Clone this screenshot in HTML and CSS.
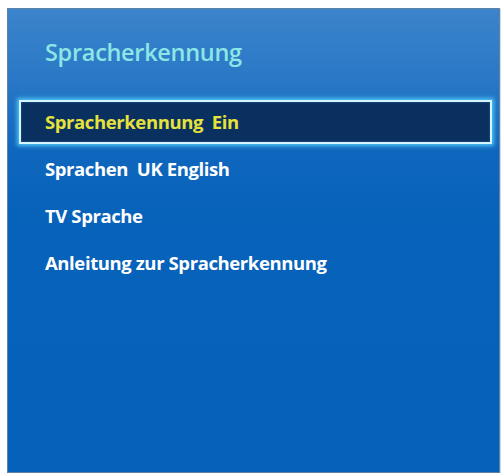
FILE: index.html
```html
<!DOCTYPE html>
<html lang="de">
<head>
<meta charset="utf-8">
<title>Spracherkennung</title>
<link rel="stylesheet" href="styles.css">
</head>
<body>
<div class="panel">
  <h1 class="title">Spracherkennung</h1>
  <ul class="menu">
    <li class="item selected">Spracherkennung&nbsp; Ein</li>
    <li class="item">Sprachen&nbsp; UK English</li>
    <li class="item">TV Sprache</li>
    <li class="item">Anleitung zur Spracherkennung</li>
  </ul>
</div>
</body>
</html>
```

FILE: styles.css
```css
html, body {
  margin: 0;
  padding: 0;
  background: #ffffff;
}

.panel {
  box-sizing: border-box;
  margin: 8px 4px 0 7px;
  width: 493px;
  height: 465px;
  border: 1px solid #5f82a8;
  box-shadow: 1px 1px 0 #c9dcec;
  background: linear-gradient(to bottom, #3c84cb 0%, #2a78c6 15%, #1067bd 30%, #0762ba 45%, #0561b9 100%);
  font-family: "Open Sans", "Lato", sans-serif;
  font-weight: 700;
  display: flex;
  flex-direction: column;
}

.title {
  margin: 0;
  padding: 28px 0 0 37px;
  height: 62px;
  box-sizing: border-box;
  font-size: 23.5px;
  font-weight: 600;
  letter-spacing: -0.3px;
  line-height: 30px;
  color: #8ce6e6;
}

.menu {
  list-style: none;
  margin: 0;
  padding: 29px 7px 0 11px;
  display: flex;
  flex-direction: column;
  gap: 3px;
}

.item {
  box-sizing: border-box;
  height: 44px;
  padding: 0 0 0 26px;
  font-size: 18.5px;
  letter-spacing: -0.4px;
  line-height: 44px;
  color: #ffffff;
  white-space: nowrap;
}

.item.selected {
  padding-left: 24px;
  border: 2px solid #d6f6ff;
  background: #0a305f;
  color: #e6e23c;
  line-height: 40px;
  box-shadow: 0 0 4px 2px #4ec3f5, inset 0 0 2px #3a6fa8;
}
```
